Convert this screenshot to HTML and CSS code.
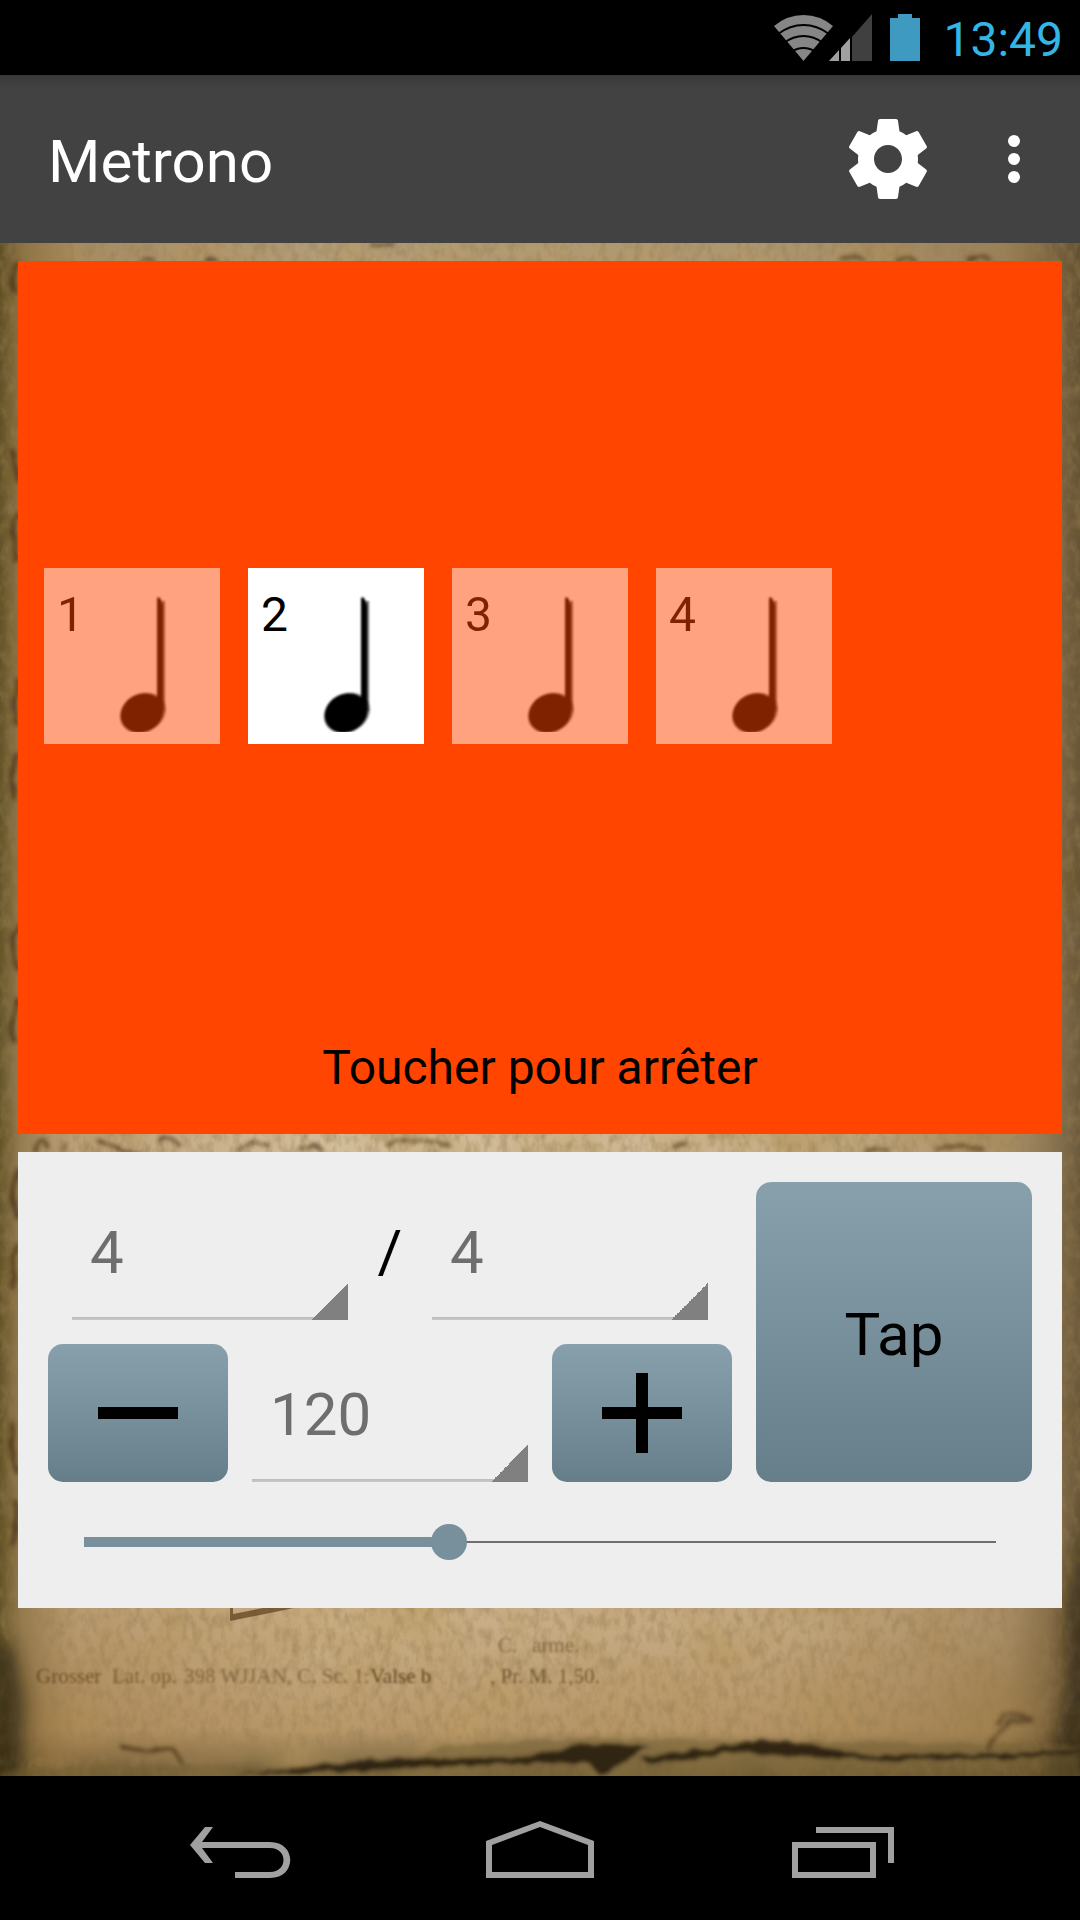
FILE: index.html
```html
<!DOCTYPE html>
<html lang="fr">
<head>
<meta charset="utf-8">
<meta name="viewport" content="width=device-width, initial-scale=1">
<title>Metrono</title>
<link rel="stylesheet" href="styles.css">
</head>
<body>
<div class="status">
  <svg class="status-icons" viewBox="774 12 150 50" aria-hidden="true">
    <path fill="#868686" d="M804.500 60 775 25Q788 14 804.500 14T834 25Z"/>
    <g fill="none" stroke="#000" stroke-width="2">
      <path d="M779 33Q791 24 804.500 24T830 33"/>
      <path d="M785 42Q794 35 804.500 35T824 42"/>
      <path d="M792 51Q798 47 804.500 47T817 51"/>
    </g>
    <path fill="#404040" d="M853 36 873 13V60H853Z"/>
    <path fill="#a0a0a0" d="M830 60 840 49V60ZM842 60V47L851 37V60Z"/>
    <path fill="#3f9ac1" d="M891 17h8v-4h14v4h8v43h-30Z"/>
  </svg>
  <time class="clock">13:49</time>
</div>
<header class="appbar">
  <h1>Metrono</h1>
  <button class="action" aria-label="Paramètres">
    <svg viewBox="0 0 24 24"><path fill="#fff" d="M19.430 12.980c.04-.32.07-.64.07-.98s-.03-.66-.07-.98l2.110-1.650c.19-.15.24-.42.12-.64l-2-3.460c-.12-.22-.39-.3-.61-.22l-2.490 1c-.52-.4-1.080-.73-1.690-.98l-.38-2.650C14.460 2.180 14.250 2 14 2h-4c-.25 0-.46.18-.49.42l-.38 2.650c-.61.25-1.170.59-1.690.98l-2.490-1c-.23-.09-.49 0-.61.22l-2 3.460c-.13.22-.07.49.12.64l2.110 1.650c-.04.32-.07.65-.07.98s.03.66.07.98l-2.110 1.650c-.19.15-.24.42-.12.64l2 3.460c.12.22.39.3.61.22l2.490-1c.52.4 1.080.73 1.690.98l.38 2.650c.03.24.24.42.49.42h4c.25 0 .46-.18.49-.42l.38-2.650c.61-.25 1.170-.59 1.690-.98l2.490 1c.23.09.49 0 .61-.22l2-3.460c.12-.22.07-.49-.12-.64l-2.110-1.650zM12 15.500c-1.930 0-3.500-1.570-3.500-3.500s1.570-3.500 3.500-3.500 3.500 1.570 3.500 3.500-1.570 3.500-3.500 3.500z"/></svg>
  </button>
  <button class="action" aria-label="Plus d'options">
    <svg viewBox="0 0 96 96" fill="#fff"><circle cx="48" cy="30" r="6"/><circle cx="48" cy="48" r="6"/><circle cx="48" cy="66" r="6"/></svg>
  </button>
</header>
<main>
  <svg class="paper" viewBox="0 243 1080 1533" preserveAspectRatio="xMidYMax slice" aria-hidden="true">
    <defs>
      <linearGradient id="base" x1="0" y1="0" x2="0" y2="1">
        <stop offset="0" stop-color="#b09c78"/><stop offset=".02" stop-color="#b49d76"/>
        <stop offset=".58" stop-color="#d2bd9a"/><stop offset=".9" stop-color="#cab089"/>
        <stop offset=".97" stop-color="#b8986a"/><stop offset="1" stop-color="#6b5935"/>
      </linearGradient>
      <linearGradient id="sides">
        <stop offset="0" stop-color="#4b3c10" stop-opacity=".8"/><stop offset=".02" stop-color="#684e1c" stop-opacity=".55"/>
        <stop offset=".07" stop-color="#8c6430" stop-opacity=".3"/><stop offset=".3" stop-color="#9a7040" stop-opacity="0"/>
        <stop offset=".7" stop-color="#8c6430" stop-opacity=".1"/><stop offset=".93" stop-color="#6b4c20" stop-opacity=".35"/>
        <stop offset="1" stop-color="#3d2d12" stop-opacity=".68"/>
      </linearGradient>
      <filter id="grain" x="0" y="0" width="100%" height="100%">
        <feTurbulence type="fractalNoise" baseFrequency=".12 .07" numOctaves="3" seed="7"/>
        <feColorMatrix values="0 0 0 0 .3  0 0 0 0 .2  0 0 0 0 .08  1.100 0 0 0 -.44"/>
      </filter>
      <filter id="stain" x="0" y="0" width="100%" height="100%">
        <feTurbulence type="fractalNoise" baseFrequency=".012" numOctaves="3" seed="3"/>
        <feColorMatrix values="0 0 0 0 .5  0 0 0 0 .33  0 0 0 0 .12  0 1.400 0 0 -.58"/>
      </filter>
      <filter id="rough" x="-5%" y="-50%" width="110%" height="200%">
        <feTurbulence type="fractalNoise" baseFrequency=".06" numOctaves="2" seed="5"/>
        <feDisplacementMap in="SourceGraphic" scale="8"/>
        <feGaussianBlur stdDeviation="2"/>
      </filter>
      <filter id="shade" x="-50%" y="-50%" width="200%" height="200%"><feGaussianBlur stdDeviation="9"/></filter>
    </defs>
    <rect y="243" width="1080" height="1533" fill="url(#base)"/>
    <rect y="243" width="1080" height="1533" filter="url(#stain)"/>
    <rect y="243" width="1080" height="1533" fill="url(#sides)"/>
    <rect y="243" width="1080" height="1533" filter="url(#grain)"/>
    <g fill="none" stroke="#3a220b" stroke-width="4" opacity=".7" filter="url(#rough)">
      <path d="M18 262q-9 14-2 32M12 450q5 24 6 32M18 512q-8 22-2 50M18 680q-8 26 0 46M18 754q-10 20-4 46M18 924q-10 24 0 46M18 998q-9 20-4 44M18 1168q-9 28 0 50M18 1244q-9 20-4 46M14 1424q-6 28 4 50M14 1500q6 22-2 46"/>
      <path d="M34 1152q8-22 14-4M60 1152l6-8M98 1142l20 6q10 8 22 4M158 1142q10-10 22 4M236 1150q22-12 34-4M298 1150q16-8 24 0M386 1144q40-8 66 2M672 1148l14-6M864 1152q14-6 26 0M938 1152q20-12 46-2" stroke-width="3"/>
      <path d="M140 262q8-8 14 0M204 262q6-8 12 0M840 262q12-10 26 0M896 262q10-8 20 0M968 262q14-10 24 0M370 244h24" stroke-width="3"/>
    </g>
    <path d="M230 1608v13l64-13Z" fill="#5a401c" opacity=".7"/>
    <path d="M233 1608v6l30-6Z" fill="#c4a681"/>
    <g fill="#4d3512" font-family="Liberation Serif, serif" font-size="21" opacity=".8" filter="url(#soft)">
      <text x="36" y="1683" opacity=".8">Grosser</text><text x="112" y="1683" opacity=".65">Lat. op.</text>
      <text x="184" y="1683" opacity=".6">398 WJJAN, C. Sc. 1:</text><text x="370" y="1683">Valse b</text>
      <text x="490" y="1683" opacity=".8">, Pr. M. 1,50.</text>
      <text x="498" y="1652" opacity=".6">C.</text><text x="532" y="1652" opacity=".6">arme.</text>
    </g>
    <path d="M-10 1650 12 1640 26 1700 20 1790H-10ZM1090 1500 1068 1600 1066 1700 1040 1790H1090Z" fill="#231d0d" opacity=".6" filter="url(#shade)"/>
    <g filter="url(#rough)">
      <path d="M0 1772Q90 1762 250 1766T440 1746Q560 1736 640 1738T1080 1746V1790H0Z" fill="#705b33" opacity=".5"/>
      <path d="M230 1776 330 1764 395 1759 520 1757 590 1744 650 1746 600 1776 588 1762 500 1764 330 1772ZM640 1758 695 1750 760 1740 795 1742 870 1756 1000 1753 1080 1750V1754L900 1762 740 1752 650 1764Z" fill="#20190d" opacity=".85"/>
      <path d="M120 1746 145 1752 172 1748 182 1764" fill="none" stroke="#4d3514" stroke-width="3"/>
      <path d="M996 1724q16-18 36-4q-30-4-44 30" fill="none" stroke="#453116" stroke-width="5" opacity=".6"/>
    </g>
  </svg>
  <button class="stage">
    <span class="beats">
      <span class="beat">1<svg class="note"><use href="#quarter"/></svg></span>
      <span class="beat current">2<svg class="note"><use href="#quarter"/></svg></span>
      <span class="beat">3<svg class="note"><use href="#quarter"/></svg></span>
      <span class="beat">4<svg class="note"><use href="#quarter"/></svg></span>
    </span>
    <span class="hint">Toucher pour arrêter</span>
  </button>
  <section class="panel">
    <div class="controls">
      <div class="fields">
        <div class="signature">
          <select class="spinner" aria-label="Temps par mesure"><option>4</option></select>
          <span class="slash">/</span>
          <select class="spinner" aria-label="Valeur du temps"><option>4</option></select>
        </div>
        <div class="tempo">
          <button class="key" aria-label="Ralentir"><svg viewBox="0 0 80 80"><path d="M0 34h80v12H0Z"/></svg></button>
          <select class="spinner" aria-label="Tempo"><option>120</option></select>
          <button class="key" aria-label="Accélérer"><svg viewBox="0 0 80 80"><path d="M0 34h34V0h12v34h34v12H46v34H34V46H0Z"/></svg></button>
        </div>
      </div>
      <button class="key tap">Tap</button>
    </div>
    <input class="slider" type="range" min="0" max="300" value="120" aria-label="Tempo">
  </section>
</main>
<nav class="navbar">
  <button aria-label="Retour"><svg viewBox="180 1818 120 60"><path fill="#a0a0a0" d="M190 1845 205 1827H213L202 1842H270C297 1842 297 1878 270 1878H235V1872H270C288 1872 288 1848 270 1848H202L213 1863H205Z"/></svg></button>
  <button aria-label="Accueil"><svg viewBox="480 1818 120 60"><path fill="#a0a0a0" fill-rule="evenodd" d="M486 1841 540 1821 594 1841V1878H486ZM492 1845V1872H588V1845L540 1827Z"/></svg></button>
  <button aria-label="Applications récentes"><svg viewBox="780 1818 120 60"><path fill="#a0a0a0" fill-rule="evenodd" d="M816 1827H894V1863H888V1833H816ZM792 1842H876V1878H792ZM798 1848V1872H870V1848Z"/></svg></button>
</nav>
<svg class="symbols" aria-hidden="true">
  <filter id="soft" x="-10%" y="-10%" width="120%" height="120%"><feGaussianBlur stdDeviation="1"/></filter>
  <symbol id="quarter" viewBox="72 18 60 146">
    <g filter="url(#soft)">
      <path d="M116 33h5v110h-5Z" opacity=".6"/>
      <ellipse cx="99" cy="145" rx="24" ry="19" transform="rotate(-28 99 145)" opacity=".5"/>
      <path d="M113 30q3-2 4 2l2 6v105h-6Z"/>
      <ellipse cx="98" cy="145" rx="22" ry="19" transform="rotate(-28 98 145)"/>
    </g>
  </symbol>
</svg>
</body>
</html>
```
FILE: styles.css
```css
* { box-sizing: border-box; }

body {
  margin: 0;
  min-height: 100vh;
  display: flex;
  flex-direction: column;
  background: #000;
  color: #000;
  font-family: Roboto, "Noto Sans", sans-serif;
  font-size: 48px;
}

button, select {
  border: 0;
  margin: 0;
  padding: 0;
  background: none;
  color: inherit;
  font: inherit;
}

svg { display: block; }

.status {
  height: 75px;
  padding: 0 17px;
  display: flex;
  align-items: center;
  justify-content: flex-end;
  gap: 20px;
}

.status-icons { width: 150px; height: 50px; }

.clock { padding-top: 3px; color: #33b5e5; }

.appbar {
  height: 168px;
  padding: 0 18px 0 48px;
  display: flex;
  align-items: center;
  gap: 30px;
  background: linear-gradient(#383838, #424242 12px);
  color: #fff;
}

.appbar h1 {
  flex: 1;
  margin: 0;
  padding-top: 4px;
  font-size: 60px;
  font-weight: 400;
}

.action { width: 96px; height: 96px; }

main {
  flex: 1;
  position: relative;
  padding: 18px 18px 168px;
  display: flex;
  flex-direction: column;
  gap: 18px;
}

.paper {
  position: absolute;
  inset: 0;
  width: 100%;
  height: 100%;
}

.stage, .panel { position: relative; }

.stage {
  flex: 1;
  display: flex;
  flex-direction: column;
  background: #ff4500;
}

.beats {
  flex: 1;
  display: flex;
  align-items: center;
  align-self: stretch;
  gap: 28px;
  padding: 14px 26px 0;
}

.beat {
  width: 176px;
  height: 176px;
  padding: 18px 44px 12px 13px;
  display: flex;
  justify-content: space-between;
  background: #fff;
  line-height: 58px;
  opacity: .5;
}

.beat.current { opacity: 1; }

.note { width: 60px; height: 146px; }

.hint {
  align-self: center;
  padding-bottom: 34px;
  line-height: 64px;
}

.panel {
  padding: 30px 30px 48px;
  background: #eee;
  font-size: 60px;
}

.controls { display: flex; gap: 24px; }

.fields {
  flex: 1;
  display: flex;
  flex-direction: column;
  gap: 24px;
}

.signature, .tempo { display: grid; height: 138px; }

.signature {
  grid-template-columns: 1fr 84px 1fr;
  padding: 0 24px;
}

.tempo { grid-template-columns: 180px 1fr 180px; gap: 24px; }

.spinner {
  appearance: none;
  min-width: 0;
  padding: 2px 18px 0;
  border-radius: 0;
  background:
    linear-gradient(135deg, transparent 50%, #808080 50%) right bottom / 36px 38px no-repeat,
    linear-gradient(#bababa, #cacaca) bottom / 100% 3px no-repeat;
  color: #6e6e6e;
}

.slash {
  padding-top: 2px;
  line-height: 136px;
  text-align: center;
}

.key {
  display: flex;
  align-items: center;
  justify-content: center;
  border-radius: 15px;
  background: linear-gradient(#88a0ac, #78909c 50%, #667e8a);
}

.key svg { width: 80px; height: 80px; }

.tap { width: 276px; padding-top: 4px; }

.slider {
  appearance: none;
  display: block;
  width: calc(100% - 36px);
  height: 36px;
  margin: 42px 18px 0;
  background:
    linear-gradient(#78909c, #78909c) 18px center / calc((100% - 36px) * .4) 10px no-repeat,
    linear-gradient(#6e6e6e, #6e6e6e) 18px center / calc(100% - 36px) 2px no-repeat;
}

.slider::-webkit-slider-thumb {
  appearance: none;
  width: 36px;
  height: 36px;
  border-radius: 50%;
  background: #78909c;
}

.navbar {
  height: 144px;
  padding: 0 90px;
  display: flex;
}

.navbar button {
  flex: 1;
  display: flex;
  align-items: center;
  justify-content: center;
}

.navbar svg { width: 120px; height: 60px; }

.symbols { position: absolute; width: 0; height: 0; }
```
